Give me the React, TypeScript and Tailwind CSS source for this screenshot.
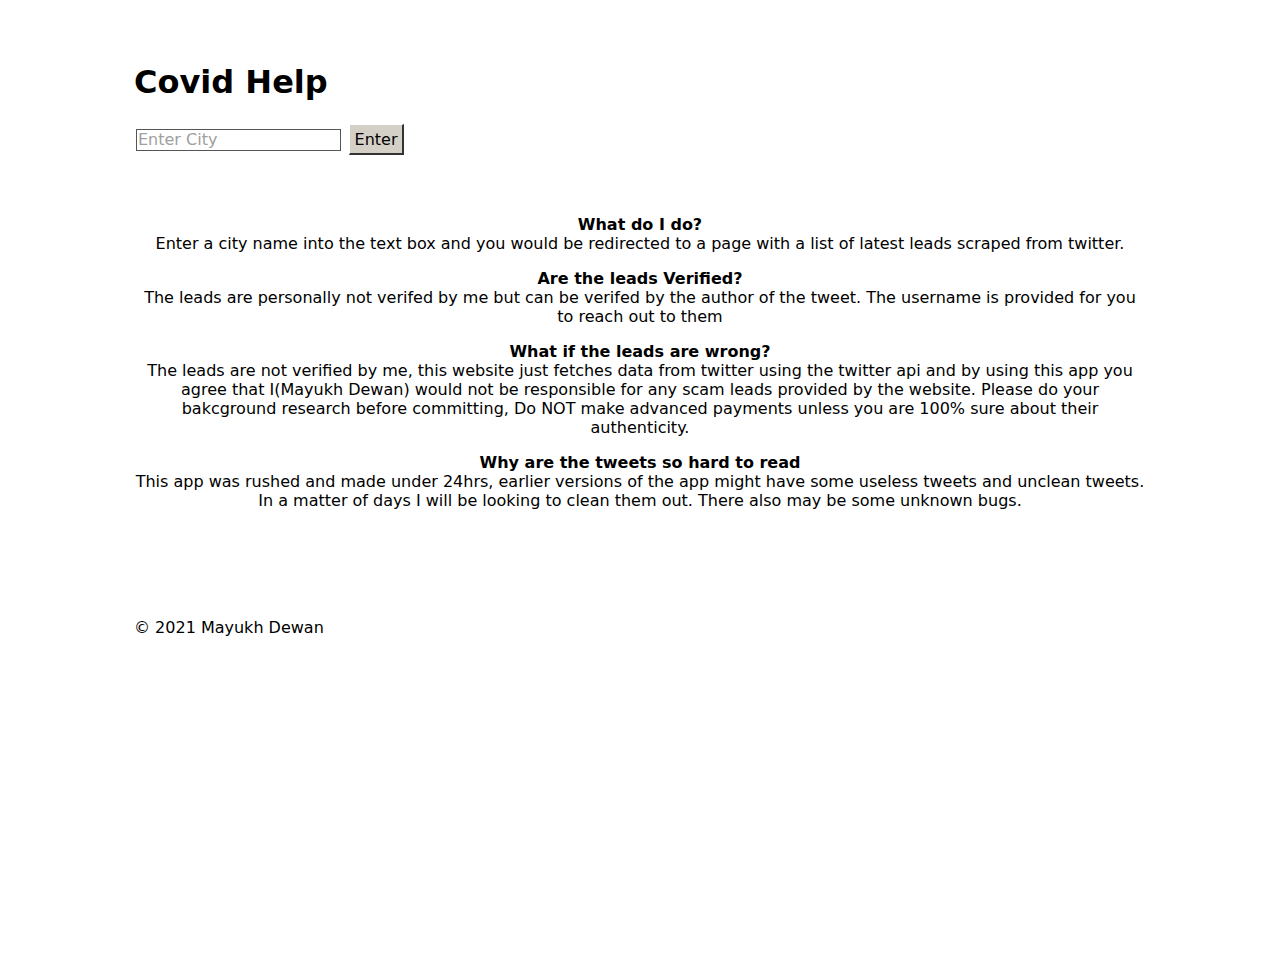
import React, { useState } from 'react';

const faqs = [
  {
    q: 'What do I do?',
    a: 'Enter a city name into the text box and you would be redirected to a page with a list of latest leads scraped from twitter.',
  },
  {
    q: 'Are the leads Verified?',
    a: 'The leads are personally not verifed by me but can be verifed by the author of the tweet. The username is provided for you to reach out to them',
  },
  {
    q: 'What if the leads are wrong?',
    a: 'The leads are not verified by me, this website just fetches data from twitter using the twitter api and by using this app you agree that I(Mayukh Dewan) would not be responsible for any scam leads provided by the website. Please do your bakcground research before committing, Do NOT make advanced payments unless you are 100% sure about their authenticity.',
  },
  {
    q: 'Why are the tweets so hard to read',
    a: 'This app was rushed and made under 24hrs, earlier versions of the app might have some useless tweets and unclean tweets. In a matter of days I will be looking to clean them out. There also may be some unknown bugs.',
  },
];

export default function App() {
  const [city, setCity] = useState('');

  return (
    <div className="min-h-screen bg-white text-black [font-family:DejaVu_Sans,sans-serif] text-[16px] leading-normal">
      <div className="mx-auto w-[1012px] pt-[64px]">
        <h1 className="text-[32px] font-bold leading-[37px]">Covid Help</h1>

        <div className="mt-[23px] flex items-center pl-[2px]">
          <input
            value={city}
            onChange={(e) => setCity(e.target.value)}
            placeholder="Enter City"
            className="w-[205px] h-[22px] border border-[#555] px-[1px] text-[16px] leading-[20px] placeholder:text-[#a0a0a0] outline-none"
          />
          <button className="ml-[8px] h-[31px] w-[55px] bg-[#d4d0c8] border-t border-l border-t-white border-l-white border-r-2 border-b-2 border-r-[#333] border-b-[#333] text-[16px] leading-[19px]">
            Enter
          </button>
        </div>

        <div className="mt-[60px] text-center flex flex-col gap-[16px]">
          {faqs.map((f) => (
            <div key={f.q} className="leading-[19px]">
              <div className="font-bold">{f.q}</div>
              <div>{f.a}</div>
            </div>
          ))}
        </div>

        <footer className="mt-[108px] leading-[19px]">© 2021 Mayukh Dewan</footer>
      </div>
    </div>
  );
}
